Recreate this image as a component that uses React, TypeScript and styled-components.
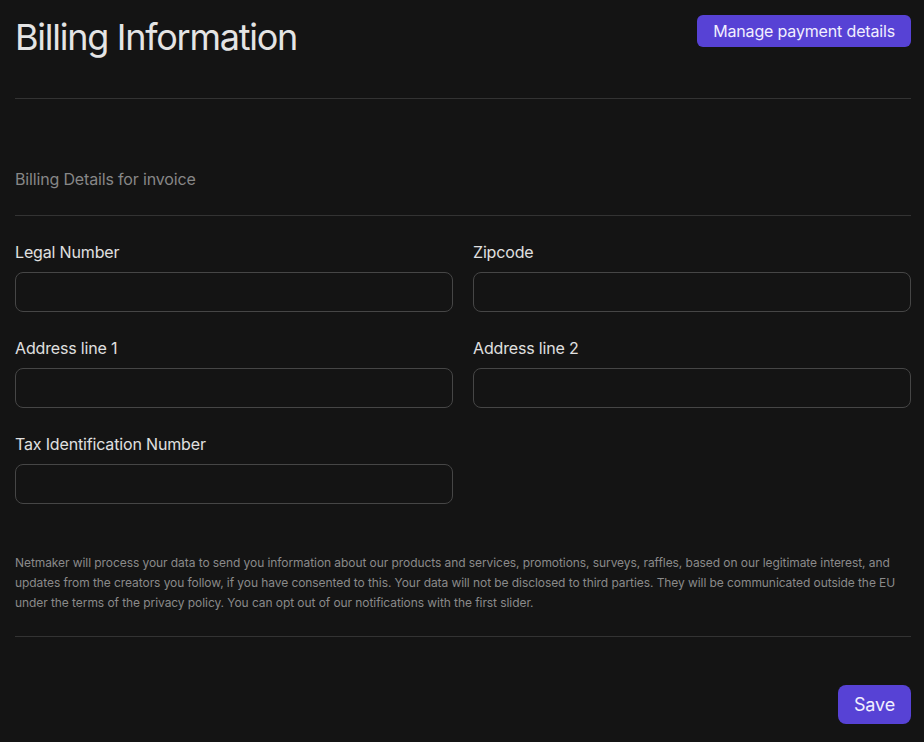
import React from "react";
import styled, { createGlobalStyle } from "styled-components";

const GlobalStyle = createGlobalStyle`
  html, body {
    margin: 0;
    padding: 0;
    background: #141414;
  }
  body {
    font-family: Inter, "Noto Sans", "Liberation Sans", sans-serif;
    color: #e2e2e2;
    letter-spacing: -0.01em;
  }
`;

const Page = styled.div`
  min-height: 742px;
  box-sizing: border-box;
  padding: 15px 13px 17px 15px;
  background: #141414;
`;

const Header = styled.div`
  display: flex;
  justify-content: space-between;
  align-items: flex-start;
`;

const Title = styled.h1`
  margin: 0;
  font-size: 36px;
  font-weight: 400;
  line-height: 44px;
  letter-spacing: -0.035em;
  color: #e4e4e4;
`;

const Button = styled.button<{ $large?: boolean }>`
  font-family: inherit;
  letter-spacing: inherit;
  border: none;
  cursor: pointer;
  background: #5742d5;
  color: #f1efff;
  font-size: ${(p) => (p.$large ? "18px" : "16px")};
  height: ${(p) => (p.$large ? "39px" : "32px")};
  padding: 0 16px;
  border-radius: ${(p) => (p.$large ? "8px" : "6px")};
`;

const Divider = styled.hr<{ $top: number }>`
  border: none;
  border-top: 1px solid #333333;
  margin: ${(p) => p.$top}px 0 0 0;
`;

const SectionTitle = styled.div`
  margin-top: 68px;
  font-size: 16px;
  line-height: 24px;
  color: #878787;
`;

const FormGrid = styled.div`
  display: grid;
  grid-template-columns: 1fr 1fr;
  column-gap: 20px;
  row-gap: 24px;
  margin-top: 24px;
`;

const Field = styled.label`
  display: flex;
  flex-direction: column;
  gap: 8px;
`;

const Label = styled.span`
  font-size: 16px;
  line-height: 24px;
  color: #e0e0e0;
`;

const Input = styled.input`
  height: 40px;
  box-sizing: border-box;
  border: 1px solid #464646;
  border-radius: 8px;
  background: #141414;
  color: #e0e0e0;
  font-family: inherit;
  font-size: 16px;
  padding: 0 12px;
  outline: none;
`;

const Notice = styled.p`
  margin: 49px 0 0 0;
  font-size: 12px;
  line-height: 20px;
  letter-spacing: -0.006em;
  color: #8a8a8a;
`;

const Footer = styled.div`
  display: flex;
  justify-content: flex-end;
  margin-top: 48px;
`;

export default function App() {
  return (
    <Page>
      <GlobalStyle />
      <Header>
        <Title>Billing Information</Title>
        <Button>Manage payment details</Button>
      </Header>
      <Divider $top={39} />

      <SectionTitle>Billing Details for invoice</SectionTitle>
      <Divider $top={24} />

      <FormGrid>
        <Field>
          <Label>Legal Number</Label>
          <Input />
        </Field>
        <Field>
          <Label>Zipcode</Label>
          <Input />
        </Field>
        <Field>
          <Label>Address line 1</Label>
          <Input />
        </Field>
        <Field>
          <Label>Address line 2</Label>
          <Input />
        </Field>
        <Field>
          <Label>Tax Identification Number</Label>
          <Input />
        </Field>
      </FormGrid>

      <Notice>
        Netmaker will process your data to send you information about our
        products and services, promotions, surveys, raffles, based on our
        legitimate interest, and updates from the creators you follow, if you
        have consented to this. Your data will not be disclosed to third
        parties. They will be communicated outside the EU under the terms of
        the privacy policy. You can opt out of our notifications with the first
        slider.
      </Notice>
      <Divider $top={23} />

      <Footer>
        <Button $large>Save</Button>
      </Footer>
    </Page>
  );
}
